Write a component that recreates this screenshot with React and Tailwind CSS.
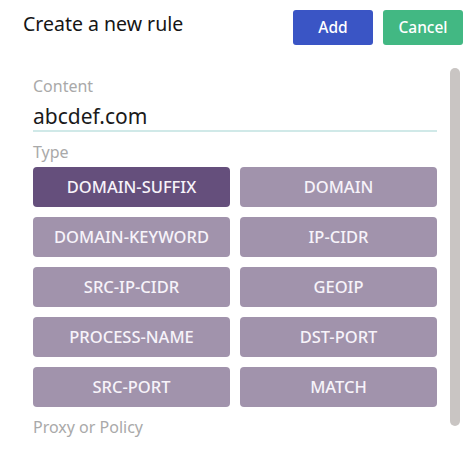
import React from 'react';

const types = [
  'DOMAIN-SUFFIX',
  'DOMAIN',
  'DOMAIN-KEYWORD',
  'IP-CIDR',
  'SRC-IP-CIDR',
  'GEOIP',
  'PROCESS-NAME',
  'DST-PORT',
  'SRC-PORT',
  'MATCH',
];

const App = () => {
  const selected = 'DOMAIN-SUFFIX';

  return (
    <div
      className="w-[475px] h-[475px] bg-white overflow-hidden"
      style={{ fontFamily: '"Noto Sans", "Open Sans", sans-serif' }}
    >
      {/* Header */}
      <div className="flex items-start justify-between pl-[23px] pr-[12px] pt-[10px]">
        <h2 className="text-[19.5px] leading-[27px] text-[#151515]">Create a new rule</h2>
        <div className="flex gap-[10px]">
          <button className="w-[80px] h-[35px] rounded-[3px] bg-[#3a55c5] text-white text-[15.5px] font-medium">
            Add
          </button>
          <button className="w-[80px] h-[35px] rounded-[3px] bg-[#42b883] text-white text-[15.5px] font-medium">
            Cancel
          </button>
        </div>
      </div>

      {/* Body */}
      <div className="flex mt-[23px] pl-[33px] pr-[15px]">
        <div className="w-[404px] pt-[6px]">
          <div className="text-[16px] leading-[24px] text-[#a9a9a9]">Content</div>
          <div className="mt-[4px] h-[30px] leading-[28px] text-[21px] text-[#1a1a1a] border-b-2 border-[#d0e9e8]">
            abcdef.com
          </div>
          <div className="mt-[8px] text-[16px] leading-[24px] text-[#a9a9a9]">Type</div>
          <div className="mt-[3px] grid grid-cols-2 gap-[10px]">
            {types.map((t) => (
              <button
                key={t}
                className={
                  'h-[40px] rounded-[4px] text-[16.5px] font-medium text-[#f7f3fa] ' +
                  (t === selected ? 'bg-[#654f7c]' : 'bg-[#a193ac]')
                }
              >
                {t}
              </button>
            ))}
          </div>
          <div className="mt-[8px] text-[16px] leading-[24px] text-[#a9a9a9]">Proxy or Policy</div>
        </div>
        <div className="ml-[13px] w-[10px]">
          <div className="h-[358px] rounded-full bg-[#c9c5c3]" />
        </div>
      </div>
    </div>
  );
};

export default App;
